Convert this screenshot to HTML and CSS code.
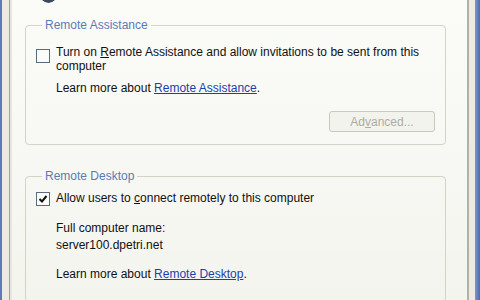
FILE: index.html
```html
<!DOCTYPE html>
<html lang="en">
<head>
  <meta charset="UTF-8">
  <title>System Properties - Remote</title>
  <link rel="stylesheet" href="styles.css">
</head>
<body>
  <!-- Dialog window edge -->
  <div class="window">
    <div class="frame-left"></div>

    <!-- Remote tab page -->
    <div class="tab-page">
      <div class="top-icon"></div>

      <!-- Remote Assistance group -->
      <fieldset class="group group-assist">
        <legend>Remote Assistance</legend>
        <div class="check-row check-row-tall">
          <span class="checkbox"></span>
          <div class="check-label">Turn on <u>R</u>emote Assistance and allow invitations to be sent from this computer</div>
        </div>
        <p class="line learn">Learn more about <a href="#">Remote Assistance</a>.</p>
        <div class="button-row">
          <button class="btn" disabled>Ad<u>v</u>anced...</button>
        </div>
      </fieldset>

      <!-- Remote Desktop group -->
      <fieldset class="group group-desktop">
        <legend>Remote Desktop</legend>
        <div class="check-row">
          <span class="checkbox checked">
            <svg width="10" height="10" viewBox="0 0 10 10"><path d="M1.5 5 L4 7.5 L8.5 2" fill="none" stroke="#111" stroke-width="2"/></svg>
          </span>
          <div class="check-label">Allow users to <u>c</u>onnect remotely to this computer</div>
        </div>
        <p class="line name-label">Full computer name:</p>
        <p class="line name-value">server100.dpetri.net</p>
        <p class="line learn learn-desktop">Learn more about <a href="#">Remote Desktop</a>.</p>
      </fieldset>
    </div>

    <div class="frame-right"></div>
  </div>
</body>
</html>
```

FILE: styles.css
```css
:root {
  --xp-blue: #5a7bb8;
  --frame-bg: #ecebe3;
  --page-top: #fbfbf8;
  --page-bottom: #f4f4ef;
  --group-border: #d3d3c6;
  --caption: #5a7cb4;
  --link: #1a3fae;
  --text: #111111;
}

body {
  margin: 0;
  font-family: 'Liberation Sans', Arial, sans-serif;
  font-size: 12px;
  color: var(--text);
  background: var(--frame-bg);
}

.window {
  display: flex;
  height: 300px;
  overflow: hidden;
}

.frame-left {
  width: 2px;
  background: var(--xp-blue);
  margin-right: 7px;
}

.frame-right {
  width: 5px;
  margin-left: 6px;
  background: linear-gradient(to right, #7b98c8, #4a6cae);
}

.tab-page {
  flex: 1;
  border-left: 1px solid #a3a398;
  border-right: 2px solid #b2b1a6;
  box-shadow: inset 2px 0 0 #e6e6df;
  background: linear-gradient(to bottom, var(--page-top), var(--page-bottom));
  padding: 0 21px 0 15px;
}

.top-icon {
  width: 17px;
  height: 19px;
  margin: -16px 0 15px 15px;
  border-radius: 50%;
  background: #3d4a5e;
}

.group {
  margin: 0;
  padding: 0 10px;
  border: 1px solid var(--group-border);
  border-radius: 4px;
  min-inline-size: 0;
}

.group legend {
  margin-left: 6px;
  padding: 0 3px;
  line-height: 14px;
  color: var(--caption);
}

.group-assist {
  padding-top: 13px;
  padding-bottom: 12px;
}

.group-desktop {
  margin-top: 24px;
  padding-top: 8px;
  padding-bottom: 20px;
}

.check-row {
  display: flex;
  align-items: flex-start;
  gap: 6px;
  line-height: 14px;
}

.checkbox {
  flex: none;
  width: 12px;
  height: 12px;
  margin-top: 1px;
  border: 1px solid #5d6a7c;
  background: #fbfbf9;
  display: flex;
  align-items: center;
  justify-content: center;
}

.check-row-tall .checkbox {
  margin-top: 4px;
}

.check-label {
  flex: 1;
  padding-right: 8px;
}

.line {
  margin: 0;
  padding-left: 20px;
  line-height: 14px;
}

.learn {
  margin-top: 8px;
}

.learn a {
  color: var(--link);
}

.button-row {
  display: flex;
  justify-content: flex-end;
  margin-top: 16px;
}

.btn {
  width: 106px;
  height: 21px;
  font-family: inherit;
  font-size: 12px;
  color: #aeac9f;
  background: #f3f3ee;
  border: 1px solid #cbc9bc;
  border-radius: 3px;
}

.name-label {
  margin-top: 15px;
}

.name-value {
  margin-top: 3px;
}

.learn-desktop {
  margin-top: 15px;
}
```
